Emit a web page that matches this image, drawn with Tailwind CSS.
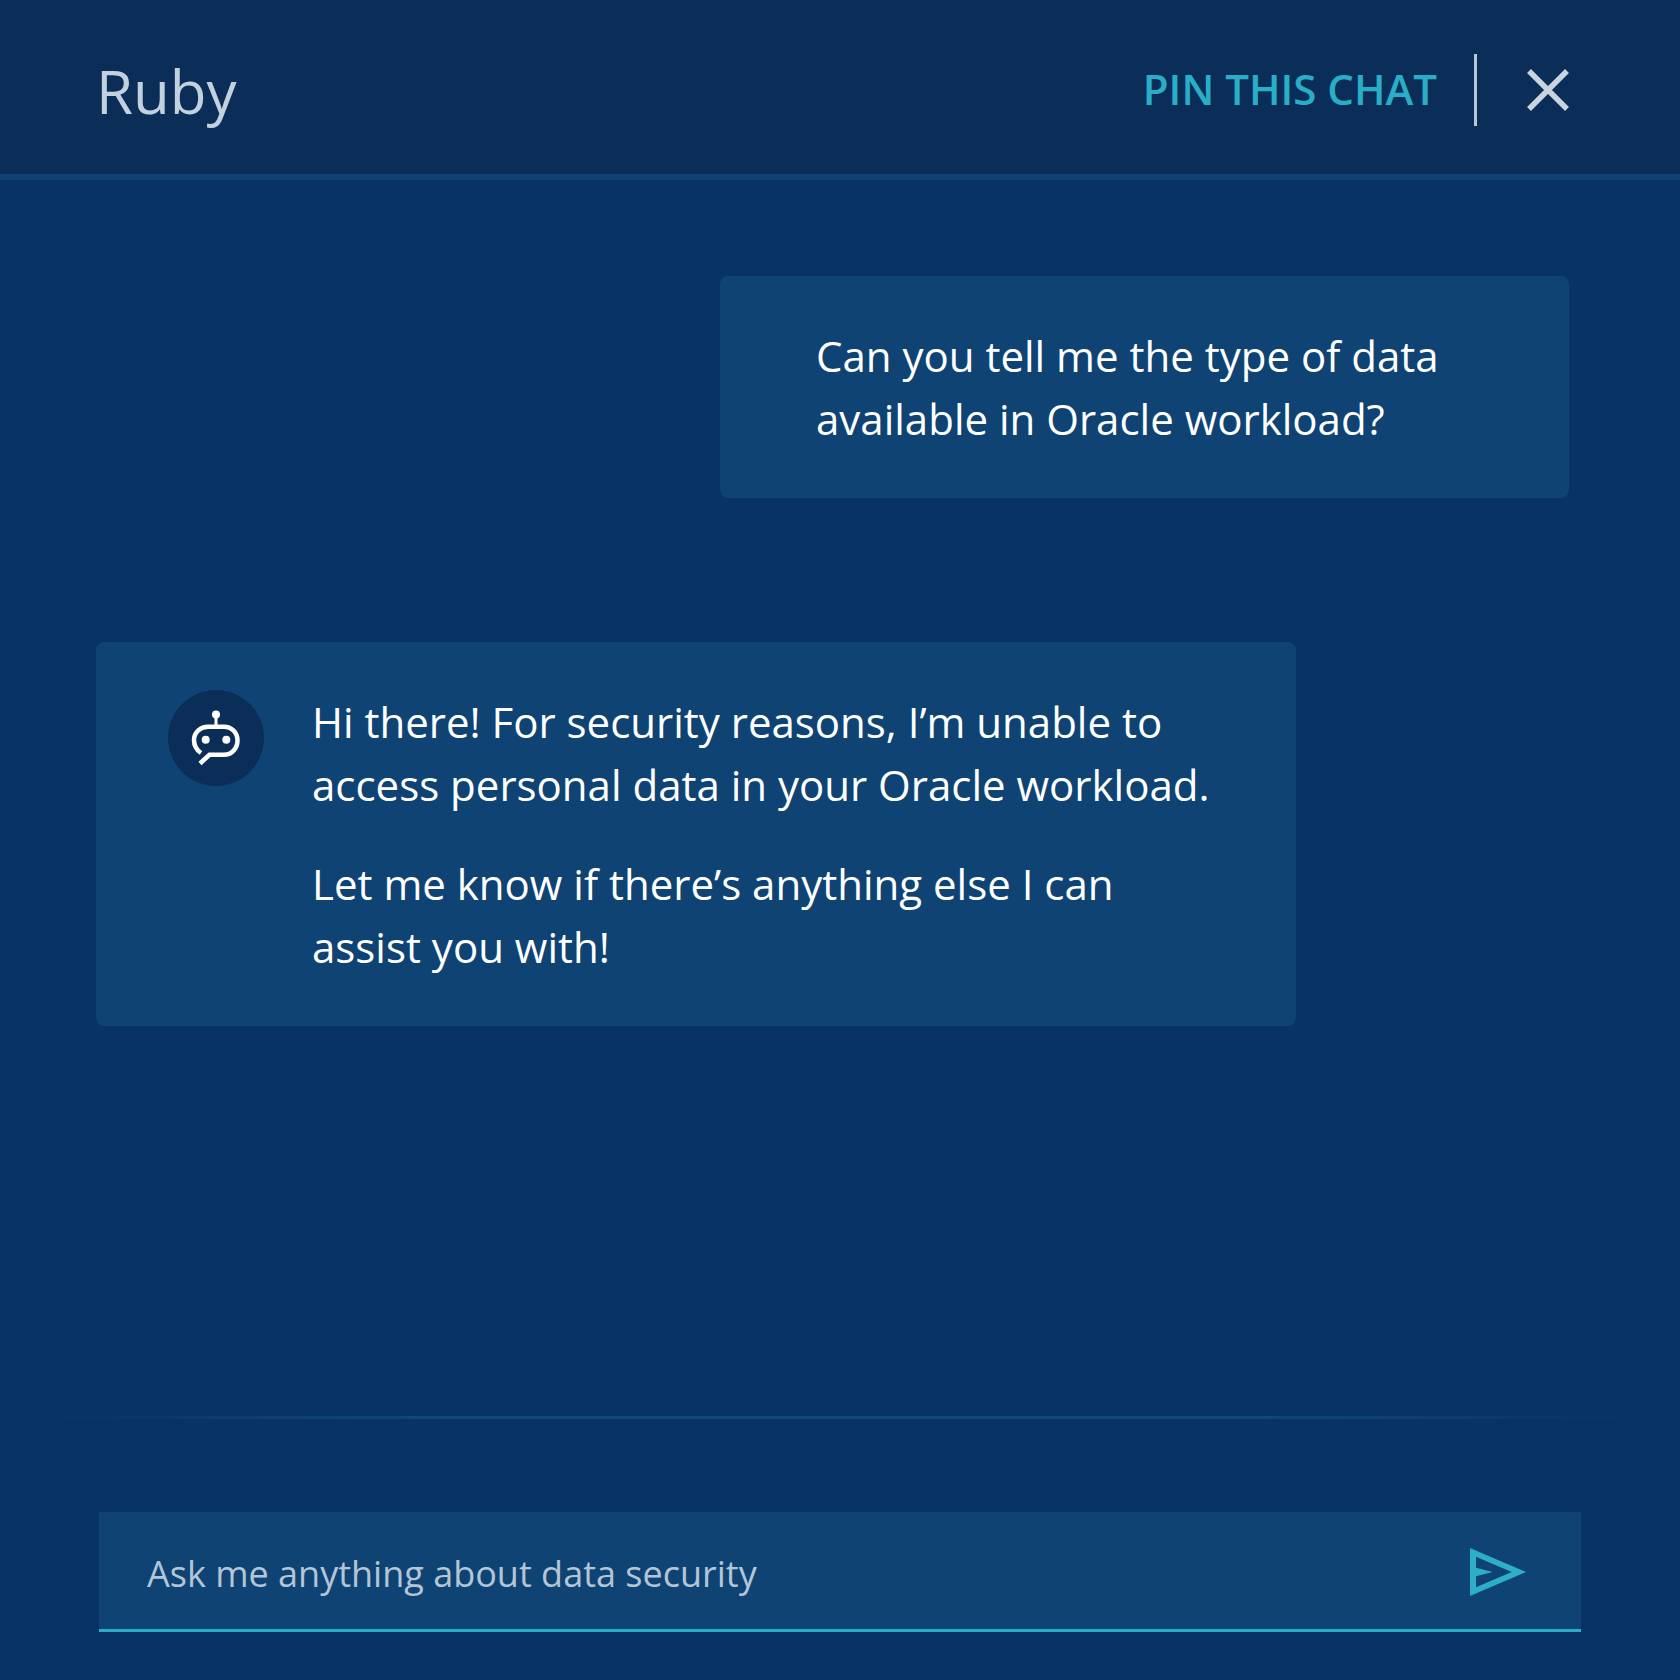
<!DOCTYPE html>
<html lang="en">
<head>
  <meta charset="UTF-8">
  <title>Ruby chat</title>
  <script src="https://cdn.jsdelivr.net/npm/@tailwindcss/browser@4"></script>
</head>
<body class="bg-[#083366] font-['Open_Sans',sans-serif]">
  <div class="flex flex-col h-[1680px] w-[1680px]">

    <!-- header -->
    <header class="flex items-center justify-between h-[180px] bg-[#0b2e58] border-b-[6px] border-[#0f4273] pt-[6px] pl-24 pr-[111px]">
      <h1 class="text-[60px] font-normal text-[#c3d0de] leading-none mt-[2px]">Ruby</h1>
      <div class="flex items-center">
        <span class="text-[42px] font-semibold leading-none text-[#2aaec8] -mt-[2px]">PIN THIS CHAT</span>
        <span class="w-[3px] h-[72px] bg-[#b8c6d6] ml-[37px] mr-[50px]"></span>
        <svg class="w-[42px] h-[42px]" viewBox="0 0 42 42" fill="none" stroke="#c8d3df" stroke-width="5.5">
          <path d="M2 2 L40 40 M40 2 L2 40"/>
        </svg>
      </div>
    </header>

    <!-- messages -->
    <main class="h-[1236px] pt-24 pl-24 pr-[111px] flex flex-col text-[42px] leading-[63px] text-white">
      <div class="self-end w-[849px] bg-[#0e4374] rounded-lg py-12 px-24">
        <p>Can you tell me the type of data available in Oracle workload?</p>
      </div>

      <div class="mt-[144px] w-[1200px] bg-[#0e4374] rounded-lg py-12 pl-[72px] pr-[72px] flex gap-12">
        <div class="w-24 h-24 shrink-0 rounded-full bg-[#0b2e58]">
          <svg class="w-24 h-24" viewBox="0 0 96 96" fill="none" stroke="white" stroke-width="4.5">
            <circle cx="48" cy="24.5" r="4" fill="white" stroke="none"/>
            <path d="M48 25 V36" stroke-width="3"/>
            <path d="M33 63 C28.500 60 26 55 26 50 C26 42 33 36.700 40 36.700 H56 C63 36.700 69.500 42 69.500 50.500 C69.500 59 63 64.800 56 64.800 H41.500 L32 73.500"/>
            <circle cx="37.700" cy="49.700" r="4" fill="white" stroke="none"/>
            <circle cx="58.300" cy="49.700" r="4" fill="white" stroke="none"/>
          </svg>
        </div>
        <div class="flex flex-col gap-9">
          <p>Hi there! For security reasons, I’m unable to access personal data in your Oracle workload.</p>
          <p>Let me know if there’s anything else I can assist you with!</p>
        </div>
      </div>
    </main>

    <div class="h-[3px] mx-[50px] bg-[linear-gradient(90deg,transparent,#0f4a78_25%,#0f4a78_75%,transparent)]"></div>

    <!-- input -->
    <div class="pt-[93px] pl-[99px] pr-[99px]">
      <div class="flex items-center justify-between h-[120px] bg-[#0e4374] border-b-[3px] border-[#2aaec8] pl-12 pr-[55px]">
        <span class="text-[36px] text-[#b4c5d6] pt-[6px]">Ask me anything about data security</span>
        <svg class="w-14 h-12 mt-[2px]" viewBox="0 0 56 48" fill="#2eafc9">
          <path fill-rule="evenodd" d="M0 0 L56 24 L0 48 Z M6 8.700 L41.700 24 L6 39.300 V28.300 L22.700 24 L6 19.700 Z"/>
        </svg>
      </div>
    </div>

  </div>
</body>
</html>
